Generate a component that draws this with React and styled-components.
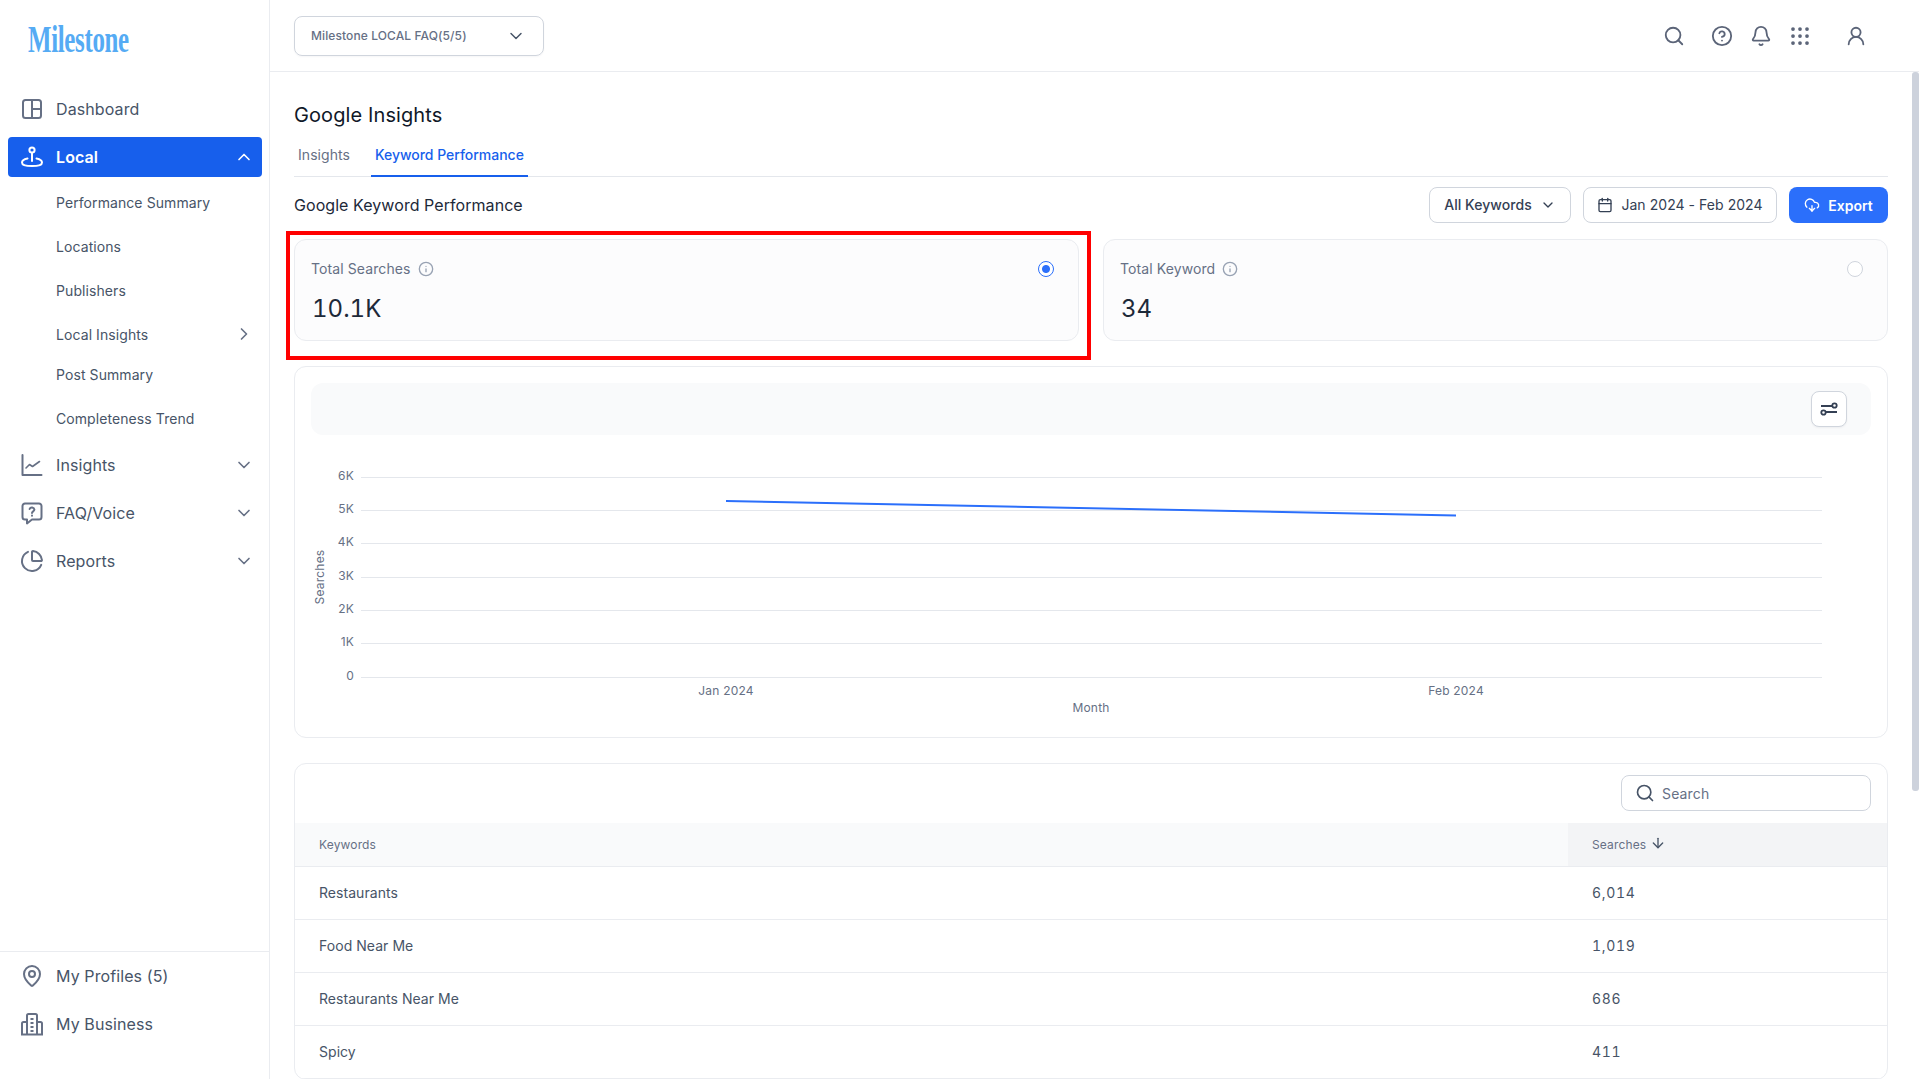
import React from "react";
import styled, { createGlobalStyle } from "styled-components";
import {
  ArrowDown,
  Bell,
  Calendar,
  ChartPie,
  ChevronDown,
  ChevronRight,
  ChevronUp,
  CircleHelp,
  CloudDownload,
  Grip,
  Info,
  MapPin,
  Search,
  UserRound,
} from "lucide-react";

const GlobalStyle = createGlobalStyle`
  html, body { margin: 0; padding: 0; height: 100%; overflow: hidden; background: #fff; }
  body { font-family: Inter, "Liberation Sans", sans-serif; color: #101828; }
  * { box-sizing: border-box; }
`;

const Page = styled.div`
  display: flex;
  height: 100vh;
  overflow: hidden;
`;

// Sidebar
const Sidebar = styled.aside`
  width: 270px;
  flex: none;
  display: flex;
  flex-direction: column;
  border-right: 1px solid #eaecf0;
`;

const LogoBox = styled.div`
  height: 85px;
  padding: 20px 0 0 28px;
  flex: none;
`;

const Logo = styled.span`
  display: inline-block;
  font-family: "Liberation Serif", serif;
  font-size: 38px;
  line-height: 38px;
  font-weight: 700;
  color: #55abf4;
  transform: scaleX(0.655);
  transform-origin: left center;
  letter-spacing: -0.5px;
`;

const Nav = styled.nav`
  flex: 1;
  padding: 0 7px 0 8px;
  display: flex;
  flex-direction: column;
`;

const NavItem = styled.div`
  height: 40px;
  margin: 4px 0;
  display: flex;
  align-items: center;
  gap: 12px;
  padding: 0 8px 0 12px;
  border-radius: 4px;
  font-size: 16px;
  font-weight: ${(p) => (p.$active ? 600 : 400)};
  color: ${(p) => (p.$active ? "#fff" : "#475467")};
  background: ${(p) => (p.$active ? "#175fec" : "transparent")};
  letter-spacing: 0.1px;
  svg { flex: none; }
`;

const SubList = styled.div`
  display: flex;
  flex-direction: column;
  margin-top: -1px;
`;

const SubItem = styled.div`
  height: ${(p) => p.$h || 44}px;
  padding-top: ${(p) => p.$pt || 0}px;
  display: flex;
  align-items: center;
  padding-left: 48px;
  padding-right: 8px;
  font-size: 14px;
  font-weight: 400;
  color: #475467;
  letter-spacing: 0.08px;
`;

const Grow = styled.span`
  flex: 1;
`;

const NavFoot = styled.div`
  flex: none;
  height: 128px;
  padding: 0 8px;
  display: flex;
  flex-direction: column;
  border-top: 1px solid #eaecf0;
`;

// Main
const Main = styled.main`
  flex: 1;
  min-width: 0;
  display: flex;
  flex-direction: column;
`;

const TopBar = styled.header`
  height: 72px;
  flex: none;
  display: flex;
  align-items: center;
  padding: 0 24px;
  border-bottom: 1px solid #eaecf0;
`;

const AccountSelect = styled.div`
  width: 250px;
  height: 40px;
  display: flex;
  align-items: center;
  justify-content: space-between;
  padding: 0 17px 0 16px;
  border: 1px solid #d0d5dd;
  border-radius: 8px;
  font-size: 12px;
  font-weight: 500;
  letter-spacing: 0.1px;
  color: #667085;
  box-shadow: 0 1px 2px rgba(16, 24, 40, 0.04);
`;

const TopIcons = styled.div`
  margin-left: auto;
  display: flex;
  align-items: center;
  color: #5b6478;
  margin-right: 28px;
`;

const TopIcon = styled.span`
  display: flex;
  margin-left: ${(p) => p.$gap}px;
`;

const Scroll = styled.div`
  flex: 1;
  position: relative;
  overflow: hidden;
  padding: 0 31px 0 24px;
`;

const Thumb = styled.div`
  position: absolute;
  right: 0;
  top: 0;
  width: 7px;
  height: 719px;
  background: #cdd2dc;
  border-radius: 3px;
`;

const Title = styled.h1`
  margin: 31px 0 0;
  font-size: 20px;
  line-height: 24px;
  font-weight: 400;
  letter-spacing: 0.1px;
  color: #101828;
`;

const Tabs = styled.div`
  display: flex;
  height: 41px;
  margin-top: 9px;
  border-bottom: 1px solid #e4e7ec;
`;

const Tab = styled.div`
  padding: 0 4px 2px;
  margin-right: ${(p) => p.$mr || 0}px;
  height: 41px;
  display: flex;
  align-items: center;
  font-size: 14px;
  font-weight: ${(p) => (p.$active ? 500 : 400)};
  letter-spacing: ${(p) => (p.$active ? "-0.02px" : "0.05px")};
  color: ${(p) => (p.$active ? "#175fec" : "#667085")};
  border-bottom: 2px solid ${(p) => (p.$active ? "#175fec" : "transparent")};
`;

const Toolbar = styled.div`
  display: flex;
  align-items: center;
  height: 36px;
  margin-top: 10px;
  gap: 12px;
`;

const SectionTitle = styled.h2`
  margin: 0 auto 0 0;
  font-size: 16px;
  font-weight: 400;
  letter-spacing: 0.06px;
  color: #1d2939;
`;

const OutlineButton = styled.div`
  height: 36px;
  width: ${(p) => p.$w}px;
  display: flex;
  align-items: center;
  justify-content: center;
  gap: ${(p) => p.$gap || 8}px;
  padding-bottom: 1px;
  border: 1px solid #d0d5dd;
  border-radius: 8px;
  font-size: 14px;
  font-weight: ${(p) => p.$weight || 400};
  letter-spacing: 0.05px;
  color: #344054;
  background: #fff;
`;

const ExportButton = styled.div`
  width: 99px;
  height: 36px;
  display: flex;
  align-items: center;
  justify-content: center;
  gap: 8px;
  border-radius: 8px;
  font-size: 14px;
  font-weight: 600;
  color: #fff;
  background: #2b6ffb;
`;

const StatRow = styled.div`
  display: grid;
  grid-template-columns: 1fr 1fr;
  gap: 24px;
  margin-top: 16px;
`;

const StatCard = styled.div`
  position: relative;
  height: 102px;
  padding: 16px;
  border: 1px solid #eaecf0;
  border-radius: 12px;
  background: #fcfcfd;
`;

const Highlight = styled.div`
  position: absolute;
  left: -9px;
  right: -13px;
  top: -9px;
  bottom: -20px;
  border: 4px solid #ff0000;
  pointer-events: none;
`;

const StatLabel = styled.div`
  display: flex;
  align-items: center;
  gap: 7px;
  height: 24px;
  font-size: 14px;
  font-weight: 400;
  letter-spacing: 0.1px;
  color: #667085;
  svg { margin-top: 1px; }
`;

const StatValue = styled.div`
  margin-top: 13px;
  padding-left: 1px;
  font-size: 24px;
  line-height: 32px;
  font-weight: 400;
  font-variant-numeric: tabular-nums;
  color: #1d2939;
`;

const Radio = styled.span`
  position: absolute;
  right: 24px;
  top: 21px;
  width: 16px;
  height: 16px;
  border-radius: 50%;
  border: ${(p) => (p.$on ? "1.5px solid #2b6ffb" : "1px solid #d0d5dd")};
  background: ${(p) =>
    p.$on ? "radial-gradient(circle, #2b6ffb 0 3.5px, #fff 4.5px)" : "#fff"};
`;

const ChartCard = styled.section`
  margin-top: 25px;
  height: 372px;
  border: 1px solid #eaecf0;
  border-radius: 12px;
  background: #fff;
`;

const ChartBand = styled.div`
  height: 52px;
  margin: 16px 16px 0;
  padding-right: 24px;
  display: flex;
  align-items: center;
  justify-content: flex-end;
  background: #f9fafb;
  border-radius: 12px;
`;

const FilterButton = styled.div`
  width: 36px;
  height: 36px;
  display: flex;
  align-items: center;
  justify-content: center;
  background: #fff;
  border: 1px solid #d0d5dd;
  border-radius: 8px;
  box-shadow: 0 1px 2px rgba(16, 24, 40, 0.05);
`;

const ChartSvg = styled.svg`
  display: block;
  width: 1592px;
  height: 301px;
  font-family: Inter, "Liberation Sans", sans-serif;
  letter-spacing: 0.2px;
`;

const TableCard = styled.section`
  margin-top: 25px;
  border: 1px solid #eaecf0;
  border-radius: 12px;
  background: #fff;
  overflow: hidden;
`;

const TableTools = styled.div`
  height: 59px;
  padding: 11px 16px 0;
  display: flex;
  justify-content: flex-end;
`;

const SearchBox = styled.div`
  width: 250px;
  height: 36px;
  display: flex;
  align-items: center;
  gap: 7px;
  padding: 0 13px;
  border: 1px solid #d0d5dd;
  border-radius: 8px;
  font-size: 14px;
  letter-spacing: 0.15px;
  color: #667085;
`;

const Table = styled.table`
  width: 100%;
  border-collapse: collapse;
  table-layout: fixed;
`;

const Th = styled.th`
  height: 43px;
  padding: 0 24px;
  text-align: left;
  font-size: 12px;
  font-weight: 400;
  letter-spacing: 0.15px;
  color: #667085;
  background: ${(p) => (p.$sorted ? "#f3f4f6" : "#f9fafb")};
  width: ${(p) => p.$w || "auto"};
  border-bottom: 1px solid #eaecf0;
`;

const SortLabel = styled.span`
  display: inline-flex;
  align-items: center;
  gap: 4px;
  svg { margin-top: -2px; color: #475467; }
`;

const Td = styled.td`
  height: 53px;
  padding: 0 24px;
  font-size: 14px;
  font-weight: 400;
  color: #475467;
  font-variant-numeric: ${(p) => (p.$num ? "tabular-nums" : "normal")};
  letter-spacing: ${(p) => (p.$num ? "0.7px" : "0.05px")};
  border-bottom: 1px solid #eaecf0;
`;

// Icons that lucide doesn't carry in this exact shape
const DashIcon = () => (
  <svg width="24" height="24" viewBox="0 0 24 24" fill="none" stroke="#667085" strokeWidth="2">
    <rect x="3" y="3" width="18" height="18" rx="2.5" />
    <path d="M12 3v18M12 12h9" />
  </svg>
);

const LocalIcon = () => (
  <svg width="24" height="24" viewBox="0 0 24 24" fill="none" stroke="#fff" strokeWidth="2" strokeLinecap="round">
    <circle cx="12" cy="5" r="2.6" />
    <path d="M12 8v8" />
    <path d="M7.5 13.4C4.4 14.1 2 15.4 2 17.4 2 19.7 6.5 21 12 21s10-1.3 10-3.6c0-2-2.4-3.3-5.5-4" />
  </svg>
);

const LineIcon = () => (
  <svg width="24" height="24" viewBox="0 0 24 24" fill="none" stroke="#667085" strokeWidth="2" strokeLinecap="round" strokeLinejoin="round">
    <path d="M2.5 2v20h19" />
    <path d="M6 15l3.5-3.5 3 2 7-5" strokeWidth="1.6" />
  </svg>
);

const FaqIcon = () => (
  <svg width="24" height="24" viewBox="0 0 24 24" fill="none" stroke="#667085" strokeWidth="2" strokeLinejoin="round">
    <path d="M5 2.500h14A2.500 2.500 0 0 1 21.500 5v11a2.500 2.500 0 0 1-2.500 2.500h-7L7 22.500v-4H5A2.500 2.500 0 0 1 2.500 16V5A2.500 2.500 0 0 1 5 2.500z" />
    <path d="M9.600 8a2.500 2.500 0 0 1 4.800.6c0 1.600-2.400 1.900-2.400 3.400" strokeLinecap="round" />
    <path d="M12 14.600v.1" strokeLinecap="round" />
  </svg>
);

const BusinessIcon = () => (
  <svg width="24" height="24" viewBox="0 0 24 24" fill="none" stroke="#667085" strokeWidth="2">
    <path d="M1 22.500h22" />
    <path d="M7 22V3.500A1.500 1.500 0 0 1 8.500 2h7A1.500 1.500 0 0 1 17 3.500V22" />
    <path d="M7 10H3.500A1.500 1.500 0 0 0 2 11.500V22M17 10h3.500A1.500 1.500 0 0 1 22 11.500V22" />
    <path d="M10.500 7h3M10.500 11h3M10.500 15h3M10.500 19h3" />
  </svg>
);

const SlidersIcon = () => (
  <svg width="20" height="20" viewBox="0 0 20 20" fill="none" stroke="#344054" strokeWidth="1.800">
    <path d="M2 7h11.500M18 13H6.500" />
    <circle cx="15.500" cy="6.500" r="2.200" />
    <circle cx="4.500" cy="13.500" r="2.200" />
  </svg>
);

const gridLines = [
  { y: 477, label: "6K" },
  { y: 510, label: "5K" },
  { y: 543, label: "4K" },
  { y: 577, label: "3K" },
  { y: 610, label: "2K" },
  { y: 643, label: "1K" },
  { y: 677, label: "0" },
];

const rows = [
  { keyword: "Restaurants", searches: "6,014" },
  { keyword: "Food Near Me", searches: "1,019" },
  { keyword: "Restaurants Near Me", searches: "686" },
  { keyword: "Spicy", searches: "411" },
];

const Chart = () => (
  <ChartSvg viewBox="295 435 1592 301">
    {gridLines.map((g) => (
      <g key={g.label}>
        <line x1="361" x2="1822" y1={g.y + 0.5} y2={g.y + 0.5} stroke="#e4e7ec" />
        <text x="354" y={g.y + 3} textAnchor="end" fontSize="12" fill="#667085">
          {g.label}
        </text>
      </g>
    ))}
    <polyline points="726,501 1456,515.500" fill="none" stroke="#2b6ffb" strokeWidth="2" />
    <text x="726" y="695" textAnchor="middle" fontSize="12" fill="#667085">
      Jan 2024
    </text>
    <text x="1456" y="695" textAnchor="middle" fontSize="12" fill="#667085">
      Feb 2024
    </text>
    <text x="1091" y="712" textAnchor="middle" fontSize="12" fill="#667085">
      Month
    </text>
    <text transform="translate(324 577) rotate(-90)" textAnchor="middle" fontSize="12" fill="#667085">
      Searches
    </text>
  </ChartSvg>
);

const App = () => (
  <Page>
    <GlobalStyle />
    <Sidebar>
      <LogoBox>
        <Logo>Milestone</Logo>
      </LogoBox>
      <Nav>
        <NavItem>
          <DashIcon />
          Dashboard
        </NavItem>
        <NavItem $active>
          <LocalIcon />
          Local
          <Grow />
          <ChevronUp size={20} strokeWidth={2} />
        </NavItem>
        <SubList>
          <SubItem>Performance Summary</SubItem>
          <SubItem>Locations</SubItem>
          <SubItem>Publishers</SubItem>
          <SubItem>
            Local Insights
            <Grow />
            <ChevronRight size={20} color="#667085" />
          </SubItem>
          <SubItem $h={37}>Post Summary</SubItem>
          <SubItem $h={48} $pt={2}>Completeness Trend</SubItem>
        </SubList>
        <NavItem>
          <LineIcon />
          Insights
          <Grow />
          <ChevronDown size={20} color="#667085" />
        </NavItem>
        <NavItem>
          <FaqIcon />
          FAQ/Voice
          <Grow />
          <ChevronDown size={20} color="#667085" />
        </NavItem>
        <NavItem>
          <ChartPie size={24} color="#667085" />
          Reports
          <Grow />
          <ChevronDown size={20} color="#667085" />
        </NavItem>
      </Nav>
      <NavFoot>
        <NavItem>
          <MapPin size={24} color="#667085" />
          My Profiles (5)
        </NavItem>
        <NavItem>
          <BusinessIcon />
          My Business
        </NavItem>
      </NavFoot>
    </Sidebar>
    <Main>
      <TopBar>
        <AccountSelect>
          Milestone LOCAL FAQ(5/5)
          <ChevronDown size={20} color="#475467" strokeWidth={1.75} />
        </AccountSelect>
        <TopIcons>
          <TopIcon><Search size={22} /></TopIcon>
          <TopIcon $gap={26}><CircleHelp size={22} /></TopIcon>
          <TopIcon $gap={17}><Bell size={22} /></TopIcon>
          <TopIcon $gap={16}><Grip size={24} strokeWidth={1.75} /></TopIcon>
          <TopIcon $gap={33}><UserRound size={22} /></TopIcon>
        </TopIcons>
      </TopBar>
      <Scroll>
        <Thumb />
        <Title>Google Insights</Title>
        <Tabs>
          <Tab $mr={17}>Insights</Tab>
          <Tab $active>Keyword Performance</Tab>
        </Tabs>
        <Toolbar>
          <SectionTitle>Google Keyword Performance</SectionTitle>
          <OutlineButton $w={142} $weight={500}>
            All Keywords
            <ChevronDown size={16} />
          </OutlineButton>
          <OutlineButton $w={194}>
            <Calendar size={16} />
            Jan 2024 - Feb 2024
          </OutlineButton>
          <ExportButton>
            <CloudDownload size={16} />
            Export
          </ExportButton>
        </Toolbar>
        <StatRow>
          <StatCard>
            <StatLabel>
              Total Searches
              <Info size={16} color="#98a2b3" />
            </StatLabel>
            <StatValue>10.1K</StatValue>
            <Radio $on />
            <Highlight />
          </StatCard>
          <StatCard>
            <StatLabel>
              Total Keyword
              <Info size={16} color="#98a2b3" />
            </StatLabel>
            <StatValue>34</StatValue>
            <Radio />
          </StatCard>
        </StatRow>
        <ChartCard>
          <ChartBand>
            <FilterButton>
              <SlidersIcon />
            </FilterButton>
          </ChartBand>
          <Chart />
        </ChartCard>
        <TableCard>
          <TableTools>
            <SearchBox>
              <Search size={20} color="#475467" />
              Search
            </SearchBox>
          </TableTools>
          <Table>
            <thead>
              <tr>
                <Th>Keywords</Th>
                <Th $sorted $w="319px">
                  <SortLabel>
                    Searches
                    <ArrowDown size={16} />
                  </SortLabel>
                </Th>
              </tr>
            </thead>
            <tbody>
              {rows.map((row) => (
                <tr key={row.keyword}>
                  <Td>{row.keyword}</Td>
                  <Td $num>{row.searches}</Td>
                </tr>
              ))}
            </tbody>
          </Table>
        </TableCard>
      </Scroll>
    </Main>
  </Page>
);

export default App;
